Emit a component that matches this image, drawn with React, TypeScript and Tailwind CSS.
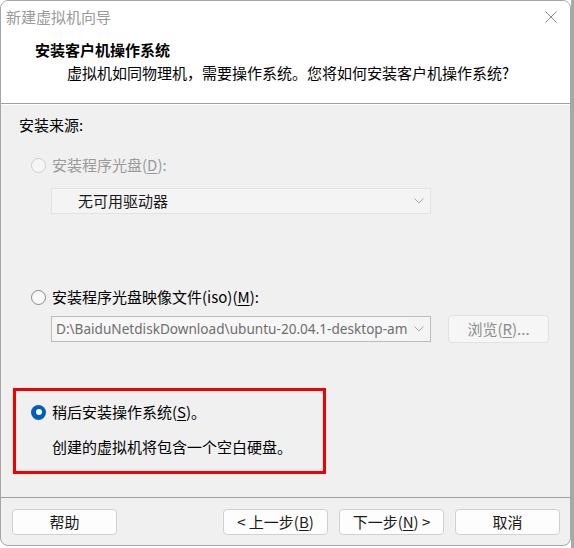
import React from "react";

const CJK = '"Noto Sans CJK SC", sans-serif';
const LAT = '"Noto Sans", "Noto Sans CJK SC", sans-serif';

function Radio({ state }: { state: "disabled" | "off" | "on" }) {
  if (state === "on") {
    return (
      <span className="w-[15px] h-[15px] rounded-full bg-[#005fb8] flex items-center justify-center shrink-0">
        <span className="w-[6px] h-[6px] rounded-full bg-white" />
      </span>
    );
  }
  return (
    <span
      className={
        state === "disabled"
          ? "w-[15px] h-[15px] rounded-full border border-[#cdcdcd] bg-[#f6f6f6] shrink-0"
          : "w-[15px] h-[15px] rounded-full border border-[#8a8a8a] bg-[#f8f8f8] shrink-0"
      }
    />
  );
}

function Chevron() {
  return (
    <svg width="10" height="6" viewBox="0 0 10 6" className="shrink-0">
      <path d="M0.5 0.5 L5 5 L9.5 0.5" fill="none" stroke="#a8a8a8" strokeWidth="1" />
    </svg>
  );
}

function Btn({ children }: { children: React.ReactNode }) {
  return (
    <div className="w-[105px] h-[26px] rounded-[4px] border border-[#d0d0d0] bg-[#fdfdfd] flex items-center justify-center text-[15px] text-[#1a1a1a] leading-[20px]">
      {children}
    </div>
  );
}

export default function App() {
  return (
    <div className="w-[574px] h-[548px] flex bg-white overflow-hidden" style={{ fontFamily: CJK }}>
      <div className="w-[571px] h-[546px] flex flex-col rounded-[8px] border border-[#a5a5a5] overflow-hidden bg-[#f0f0f0]">
        {/* header */}
        <div className="bg-white h-[102px] flex flex-col shrink-0">
          <div className="h-[31px] flex items-center justify-between pl-[5px] pr-[13px]">
            <span className="text-[15px] leading-[20px] text-[#9a9a9a]">新建虚拟机向导</span>
            <svg width="12" height="12" viewBox="0 0 12 12">
              <path d="M0.5 0.5 L11.5 11.5 M11.5 0.5 L0.5 11.5" stroke="#8a8a8a" strokeWidth="1" fill="none" />
            </svg>
          </div>
          <div className="pl-[34px] mt-[8px] font-bold text-[15px] leading-[20px] text-black">安装客户机操作系统</div>
          <div className="pl-[66px] mt-[3px] text-[15px] leading-[20px] text-black">
            虚拟机如同物理机，需要操作系统。您将如何安装客户机操作系统?
          </div>
        </div>
        <div className="h-px bg-[#a0a0a0] shrink-0" />
        <div className="h-px bg-white shrink-0" />

        {/* content */}
        <div className="flex-1 flex flex-col text-[15px] leading-[20px]">
          <div className="ml-[18px] mt-[10px] text-black">安装来源:</div>

          <div className="ml-[30px] mt-[20px] h-[20px] flex items-center gap-[6px] text-[#9a9a9a]">
            <Radio state="disabled" />
            <span>
              安装程序光盘(<span className="underline underline-offset-2">D</span>):
            </span>
          </div>
          <div className="ml-[50px] mt-[13px] w-[380px] h-[26px] border border-[#e3e3e3] bg-[#f4f4f4] flex items-center pl-[26px] pr-[6px]">
            <span className="flex-1 text-[#1a1a1a]">无可用驱动器</span>
            <Chevron />
          </div>

          <div className="ml-[30px] mt-[73px] h-[20px] flex items-center gap-[6px] text-black">
            <Radio state="off" />
            <span>
              安装程序光盘映像文件(iso)(<span className="underline underline-offset-2">M</span>):
            </span>
          </div>
          <div className="ml-[50px] mt-[9px] flex items-start gap-[17px]">
            <div className="w-[380px] h-[26px] border border-[#bdbdbd] bg-[#f4f4f4] flex items-center pl-[4px] pr-[6px]">
              <span
                className="w-[352px] overflow-hidden whitespace-nowrap text-[#6e6e6e] bg-[#f7f7f7] text-[13.6px]"
                style={{ fontFamily: LAT }}
              >
                D:\BaiduNetdiskDownload\ubuntu-20.04.1-desktop-am
              </span>
              <span className="flex-1" />
              <Chevron />
            </div>
            <div className="w-[101px] h-[28px] -mt-px rounded-[4px] border border-[#e2e2e2] bg-[#f6f6f6] flex items-center justify-center text-[#8c8c8c]">
              <span>
                浏览(<span className="underline underline-offset-2">R</span>)...
              </span>
            </div>
          </div>

          <div className="ml-[12px] mt-[45px] w-[313px] h-[86px] border-[3px] border-[#f00000] flex flex-col pl-[15px] pt-[11px]">
            <div className="h-[20px] flex items-center gap-[6px] text-black">
              <Radio state="on" />
              <span>
                稍后安装操作系统(<span className="underline underline-offset-2">S</span>)。
              </span>
            </div>
            <div className="mt-[15px] ml-[21px] text-black">创建的虚拟机将包含一个空白硬盘。</div>
          </div>
        </div>

        {/* footer */}
        <div className="h-px bg-[#a0a0a0] shrink-0" />
        <div className="h-[47px] shrink-0 flex items-start pt-[11px] pl-[11px] pr-[10px]">
          <Btn>帮助</Btn>
          <div className="flex-1" />
          <div className="flex gap-[11px]">
            <Btn>
              &lt; 上一步(<span className="underline underline-offset-2">B</span>)
            </Btn>
            <Btn>
              下一步(<span className="underline underline-offset-2">N</span>) &gt;
            </Btn>
            <Btn>取消</Btn>
          </div>
        </div>
      </div>
      <div className="flex-1 bg-[#a8a8a8]" />
    </div>
  );
}
